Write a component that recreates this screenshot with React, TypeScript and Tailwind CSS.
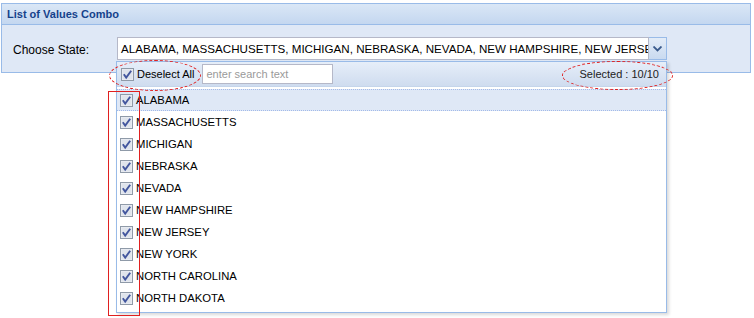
const states = [
  "ALABAMA",
  "MASSACHUSETTS",
  "MICHIGAN",
  "NEBRASKA",
  "NEVADA",
  "NEW HAMPSHIRE",
  "NEW JERSEY",
  "NEW YORK",
  "NORTH CAROLINA",
  "NORTH DAKOTA",
];

function Check() {
  return (
    <svg width="13" height="13" viewBox="0 0 13 13" className="shrink-0">
      <rect x="0.5" y="0.5" width="12" height="12" fill="#eef1f6" stroke="#8f9aa8" />
      <rect x="1.5" y="1.5" width="10" height="10" fill="#dfe4ec" />
      <path d="M2.8 6.3 L5.2 9.6 L10.2 2.8" fill="none" stroke="#42569e" strokeWidth="1.9" />
    </svg>
  );
}

export default function App() {
  return (
    <div
      className="relative w-[754px] h-[318px] bg-white overflow-hidden text-[12px] text-black"
      style={{ fontFamily: "Tahoma, 'Liberation Sans', Arial, sans-serif" }}
    >
      {/* panel */}
      <div className="ml-px mt-[3px] w-[750px] border border-[#99bbe8]">
        <div className="h-[21px] flex items-center pl-[5px] bg-gradient-to-b from-[#dae7f6] to-[#c4d7f0] border-b border-[#99bbe8] text-[11px] font-bold text-[#15428b]">
          List of Values Combo
        </div>
        <div className="h-[47px] bg-[#dfe8f6] flex items-start pt-[12px]">
          <div className="w-[115px] pl-[11px] pt-[4px]">Choose State:</div>
          <div className="flex h-[23px]">
            <div className="w-[532px] h-[23px] bg-white border border-[#b5b8c8] pl-[3px] flex items-center whitespace-nowrap overflow-hidden text-[11.6px]">
              ALABAMA, MASSACHUSETTS, MICHIGAN, NEBRASKA, NEVADA, NEW HAMPSHIRE, NEW JERSEY
            </div>
            <div className="w-[18px] h-[23px] border border-l-0 border-[#99bbe8] bg-gradient-to-b from-[#e3ecf8] to-[#c9daf0] flex items-center justify-center">
              <svg width="9" height="6" viewBox="0 0 9 6">
                <path d="M0.5 0.5 L4.5 4.5 L8.5 0.5" fill="none" stroke="#3a5a8c" strokeWidth="1.8" />
              </svg>
            </div>
          </div>
        </div>
      </div>

      {/* dropdown list */}
      <div className="absolute left-[116px] top-[61px] w-[551px] h-[252px] bg-white border border-[#99bbe8] shadow-[2px_2px_3px_rgba(0,0,0,0.15)] text-[11.3px]">
        <div className="h-[25px] flex items-center bg-gradient-to-b from-[#e6eef9] to-[#cfdcef] border-b border-[#c5d5ea] pl-[4px] pr-[7px] text-[11px]">
          <Check />
          <span className="ml-[3px]">Deselect All</span>
          <div className="ml-[8px] w-[131px] h-[20px] bg-white border border-[#b5b8c8] pl-[3px] flex items-center text-[#9a9a9a]">
            enter search text
          </div>
          <span className="ml-auto text-[#222]">Selected : 10/10</span>
        </div>
        <div className="pt-[2px]">
          {states.map((s, i) => (
            <div
              key={s}
              className={
                "h-[22px] flex items-center pl-[3px] " +
                (i === 0 ? "bg-[#dfe8f6] border-y border-dotted border-[#a3bae9]" : "")
              }
            >
              <Check />
              <span className="ml-[3px]">{s}</span>
            </div>
          ))}
        </div>
      </div>

      {/* red annotations */}
      <div className="absolute left-[109px] top-[60px] w-[92px] h-[31px] rounded-[50%] border border-dashed border-[#e02020]" />
      <div className="absolute left-[562px] top-[61px] w-[111px] h-[29px] rounded-[50%] border border-dashed border-[#e02020]" />
      <div className="absolute left-[108px] top-[91px] w-[32px] h-[225px] border border-[#e02020]" />
    </div>
  );
}
